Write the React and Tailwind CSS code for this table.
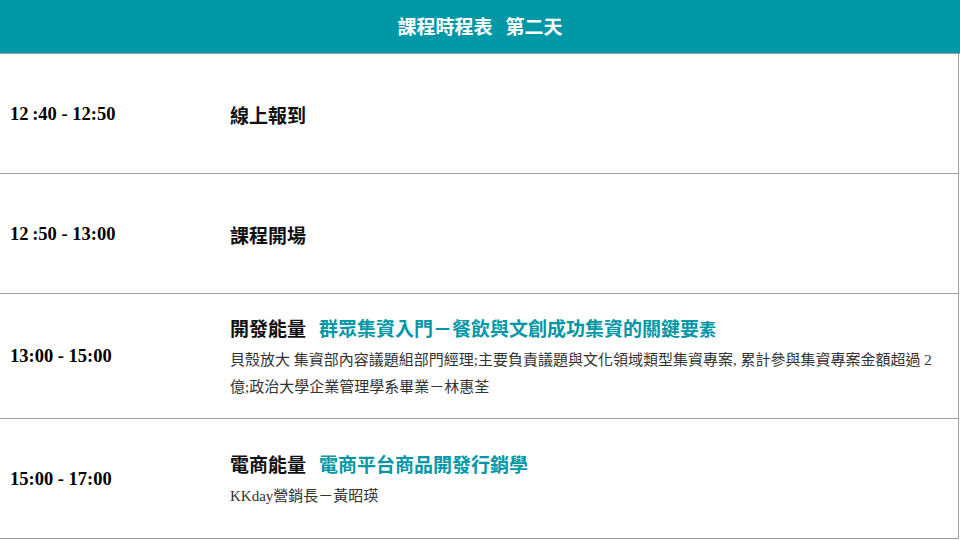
import React from "react";

const rows = [
  { time: "12\u2009:40 - 12:50", title: "線上報到", h: "h-[120px]" },
  { time: "12\u2009:50 - 13:00", title: "課程開場", h: "h-[120px]" },
  {
    time: "13:00 - 15:00",
    title: "開發能量",
    topic: "群眾集資入門－餐飲與文創成功集資的關鍵要",
    last: "素",
    desc: "貝殼放大 集資部內容議題組部門經理;主要負責議題與文化領域類型集資專案, 累計參與集資專案金額超過 2 億;政治大學企業管理學系畢業－林惠荃",
    h: "h-[125px]",
  },
  {
    time: "15:00 - 17:00",
    title: "電商能量",
    topic: "電商平台商品開發行銷學",
    desc: "KKday營銷長－黃昭瑛",
    h: "h-[120px]",
  },
];

export default function App() {
  return (
    <div className="w-[960px] h-[540px] bg-white overflow-hidden">
      <div className="h-[54px] bg-[#0097a7] flex items-center justify-center border-b border-[#9e9e9e]">
        <h1 className="text-white text-[19px] font-bold font-['Noto_Sans_CJK_TC',sans-serif] flex gap-[13px]">
          <span>課程時程表</span>
          <span>第二天</span>
        </h1>
      </div>
      <div className="w-[959px] border-r border-[#9e9e9e]">
        {rows.map((r) => (
          <div key={r.time} className={`${r.h} flex items-center border-b border-[#9e9e9e]`}>
            <div className="w-[230px] pl-[10px] pt-[2px] text-[18.5px] font-bold text-black font-['Liberation_Serif',serif]">
              {r.time}
            </div>
            <div className="flex-1 pr-[14px] pt-[3px]">
              <div className="flex items-baseline text-[19px] font-bold font-['Noto_Sans_CJK_TC',sans-serif]">
                <span className="text-[#111]">{r.title}</span>
                {r.topic && (
                  <span className="ml-[13px] text-[#0097a7]">
                    {r.topic}
                    {r.last && <span className="text-[17px]">{r.last}</span>}
                  </span>
                )}
              </div>
              {r.desc && (
                <p className="mt-[5px] text-[15px] leading-[27px] text-[#333] font-['Liberation_Serif','Noto_Sans_CJK_TC',serif]">
                  {r.desc}
                </p>
              )}
            </div>
          </div>
        ))}
      </div>
    </div>
  );
}
